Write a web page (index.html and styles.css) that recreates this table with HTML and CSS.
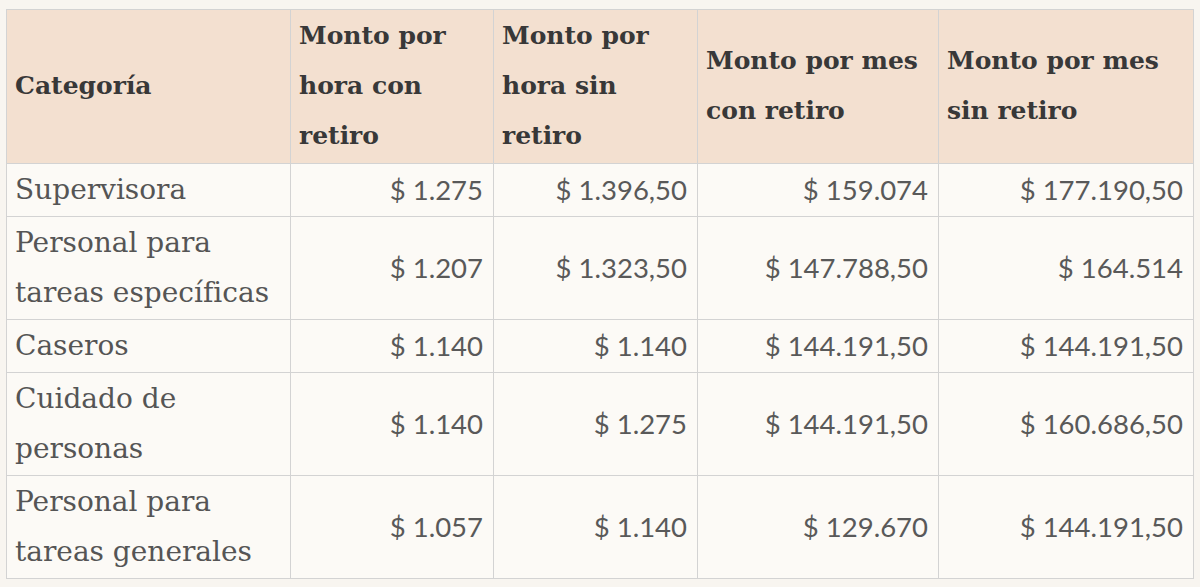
FILE: index.html
```html
<!DOCTYPE html>
<html lang="es">
<head>
<meta charset="utf-8">
<link rel="stylesheet" href="styles.css">
</head>
<body>
<div class="wrap">
<table class="salaries">
<colgroup>
<col class="c1"><col class="c2"><col class="c3"><col class="c4"><col class="c5">
</colgroup>
<thead>
<tr>
<th>Categoría</th>
<th>Monto por hora con retiro</th>
<th>Monto por hora sin retiro</th>
<th>Monto por mes con retiro</th>
<th>Monto por mes sin retiro</th>
</tr>
</thead>
<tbody>
<tr><td class="cat">Supervisora</td><td class="num">$ 1.275</td><td class="num">$ 1.396,50</td><td class="num">$ 159.074</td><td class="num">$ 177.190,50</td></tr>
<tr><td class="cat">Personal para tareas específicas</td><td class="num">$ 1.207</td><td class="num">$ 1.323,50</td><td class="num">$ 147.788,50</td><td class="num">$ 164.514</td></tr>
<tr><td class="cat">Caseros</td><td class="num">$ 1.140</td><td class="num">$ 1.140</td><td class="num">$ 144.191,50</td><td class="num">$ 144.191,50</td></tr>
<tr><td class="cat">Cuidado de personas</td><td class="num">$ 1.140</td><td class="num">$ 1.275</td><td class="num">$ 144.191,50</td><td class="num">$ 160.686,50</td></tr>
<tr><td class="cat">Personal para tareas generales</td><td class="num">$ 1.057</td><td class="num">$ 1.140</td><td class="num">$ 129.670</td><td class="num">$ 144.191,50</td></tr>
</tbody>
</table>
</div>
</body>
</html>
```

FILE: styles.css
```css
html, body {
  margin: 0;
  padding: 0;
  background: #f8f5f0;
}
.wrap {
  padding: 9px 7px 0 6px;
}
.salaries {
  border-collapse: collapse;
  table-layout: fixed;
  width: 1187px;
  background: #fcfaf6;
  color: #555;
}
.c1 { width: 284px; }
.c2 { width: 203px; }
.c3 { width: 204px; }
.c4 { width: 241px; }
.c5 { width: 255px; }
.salaries th,
.salaries td {
  border: 1px solid #d3d3d3;
  padding: 1px 9px 1px 8px;
  line-height: 50px;
  vertical-align: middle;
}
.salaries th {
  background: #f3e0d0;
  color: #383838;
  font-family: "DejaVu Serif", serif;
  font-weight: bold;
  font-size: 25px;
  text-align: left;
  padding-top: 1px;
  padding-bottom: 2px;
}
.salaries td.cat {
  font-family: "DejaVu Serif", serif;
  font-size: 28px;
}
.salaries td.num {
  font-family: Lato, "Liberation Sans", sans-serif;
  font-size: 27.5px;
  color: #595959;
  text-align: right;
  padding-right: 10px;
}
```
